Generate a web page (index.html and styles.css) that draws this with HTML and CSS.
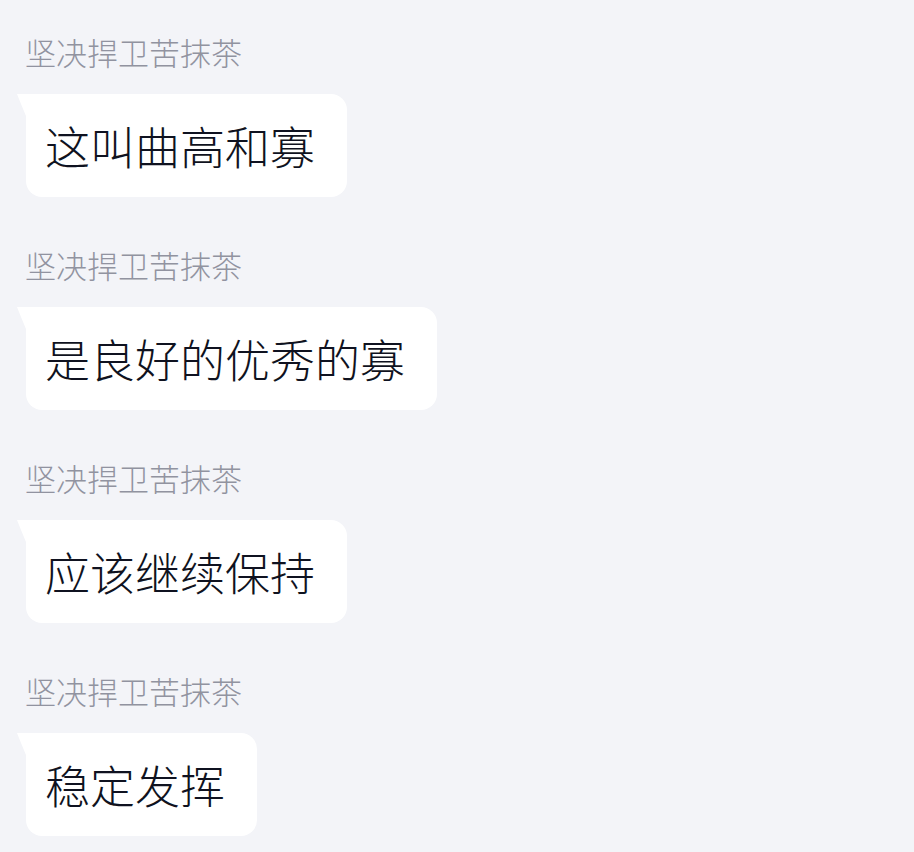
FILE: index.html
```html
<!DOCTYPE html>
<html lang="zh-CN">
<head>
    <meta charset="UTF-8">
    <meta name="viewport" content="width=device-width, initial-scale=1.0">
    <title>聊天记录</title>
    <link rel="stylesheet" href="styles.css">
</head>
<body>
<div class="chat">
    <div class="message">
        <div class="sender">坚决捍卫苦抹茶</div>
        <div class="bubble">这叫曲高和寡</div>
    </div>
    <div class="message">
        <div class="sender">坚决捍卫苦抹茶</div>
        <div class="bubble">是良好的优秀的寡</div>
    </div>
    <div class="message">
        <div class="sender">坚决捍卫苦抹茶</div>
        <div class="bubble">应该继续保持</div>
    </div>
    <div class="message">
        <div class="sender">坚决捍卫苦抹茶</div>
        <div class="bubble">稳定发挥</div>
    </div>
</div>
</body>
</html>
```

FILE: styles.css
```css
body {
    margin: 0;
    padding: 0;
    background-color: #f3f4f8;
    font-family: "Noto Sans CJK SC", "Noto Sans", sans-serif;
    min-height: 100vh;
}
.chat {
    display: flex;
    flex-direction: column;
    gap: 48px;
    padding: 32px 0 0 25px;
}
.message {
    display: flex;
    flex-direction: column;
    align-items: flex-start;
    gap: 22px;
}
.sender {
    font-size: 31px;
    line-height: 40px;
    font-weight: 300;
    color: #9193a0;
}
.bubble {
    position: relative;
    margin-left: 1px;
    padding: 20px 32px 20px 19px;
    font-size: 45px;
    line-height: 63px;
    font-weight: 300;
    color: #0f1220;
    background-color: #fff;
    border-radius: 0 16px 16px 16px;
}
.bubble::before {
    content: "";
    position: absolute;
    top: 0;
    left: -9px;
    width: 10px;
    height: 22px;
    background-color: #fff;
    clip-path: polygon(0 0, 100% 0, 100% 100%, 90% 100%, 40% 45%);
}
```
